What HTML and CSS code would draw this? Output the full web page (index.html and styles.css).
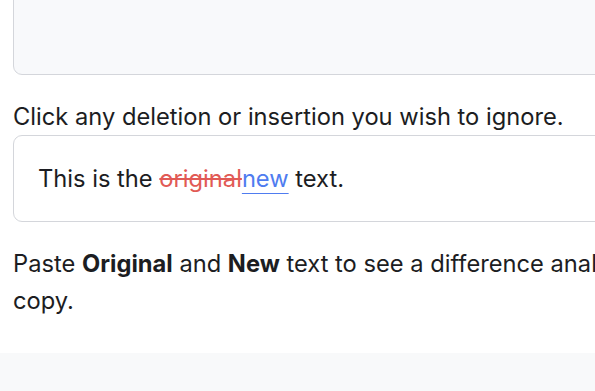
FILE: index.html
```html
<!DOCTYPE html>
<html lang="en">
<head>
<meta charset="utf-8">
<link rel="stylesheet" href="styles.css">
</head>
<body>
<div class="page">
  <main class="content">
    <div class="input-box"></div>
    <p class="label">Click any deletion or insertion you wish to ignore.</p>
    <div class="diff-box">This is the <del class="del">original</del><ins class="ins">new</ins> text.</div>
    <p class="help">Paste <strong>Original</strong> and <strong>New</strong> text to see a difference analysis and a clean copy.</p>
  </main>
  <footer class="footer"></footer>
</div>
</body>
</html>
```
FILE: styles.css
```css
html, body {
  margin: 0;
  padding: 0;
  background: #ffffff;
}
.page {
  width: 595px;
  height: 391px;
  overflow: hidden;
  font-family: Inter, "Noto Sans", sans-serif;
  font-size: 23.7px;
  line-height: 33px;
  color: #1c1d22;
}
.content {
  padding-left: 13px;
  width: 900px;
  display: flex;
  flex-direction: column;
}
.input-box {
  margin-top: -20px;
  height: 93px;
  background: #f8f9fb;
  border: 1px solid #d4d6db;
  border-radius: 9px;
}
.label {
  margin: 25px 0 2px;
}
.diff-box {
  border: 1px solid #d4d6db;
  border-radius: 9px;
  padding: 26px 24px;
  background: #ffffff;
}
.del {
  color: #e15a55;
  text-decoration: line-through;
  text-decoration-color: #e15a55;
}
.ins {
  color: #4f7cf0;
  text-decoration: underline;
  text-decoration-color: #4f7cf0;
  text-underline-offset: 6px;
  text-decoration-thickness: 1px;
}
.help {
  margin: 23px 0 0;
  line-height: 37px;
  width: 790px;
}
.help strong {
  font-weight: 700;
}
.footer {
  margin-top: 34px;
  height: 60px;
  background: #f8f9fa;
}
```
